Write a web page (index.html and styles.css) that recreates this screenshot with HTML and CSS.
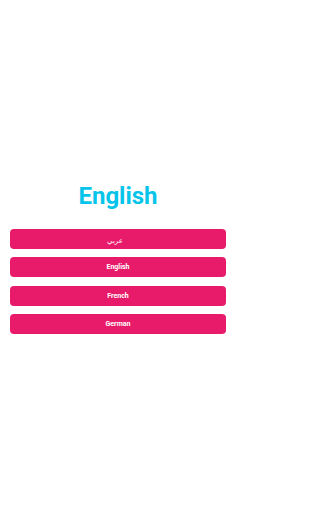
FILE: index.html
```html
<!DOCTYPE html>
<html lang="en">
<head>
<meta charset="utf-8">
<title>Language</title>
<link rel="stylesheet" href="styles.css">
</head>
<body>
<main class="screen">
  <h1 class="title">English</h1>
  <div class="options">
    <button class="option" lang="ar" dir="rtl">عربي</button>
    <button class="option">English</button>
    <button class="option">French</button>
    <button class="option">German</button>
  </div>
</main>
</body>
</html>
```
FILE: styles.css
```css
html, body {
  margin: 0;
  padding: 0;
  background: #ffffff;
}
body {
  font-family: Roboto, "Noto Sans", "DejaVu Sans", sans-serif;
  width: 236px;
  height: 512px;
  overflow: hidden;
}
.screen {
  display: flex;
  flex-direction: column;
  align-items: stretch;
  padding-top: 182px;
}
.title {
  margin: 0;
  text-align: center;
  font-size: 24px;
  line-height: 28px;
  font-weight: 700;
  color: #06c4ea;
}
.options {
  display: flex;
  flex-direction: column;
  gap: 8.3px;
  margin: 19px 10px 0;
}
.option {
  flex: 0 0 20px;
  height: 20px;
  box-sizing: border-box;
  border: none;
  border-radius: 4px;
  background: #e81a6a;
  color: #ffffff;
  font-family: Roboto, "Noto Sans", "DejaVu Sans", sans-serif;
  font-size: 7px;
  line-height: 20px;
  font-weight: 700;
  padding: 0;
  cursor: pointer;
}
.option[lang="ar"] {
  padding-top: 2px;
  padding-right: 6px;
  font-weight: 400;
}
```
